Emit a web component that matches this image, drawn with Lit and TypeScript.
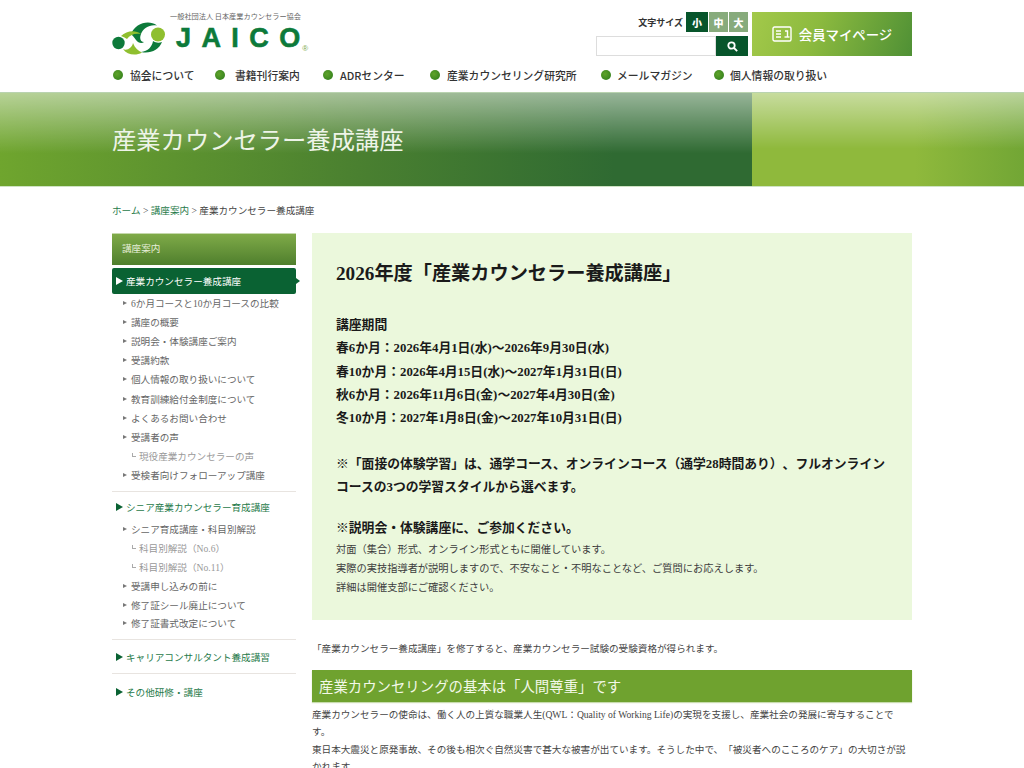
import { LitElement, html, css, svg } from "lit";
import { customElement } from "lit/decorators.js";

const navItems = [
  { t: "協会について", w: 102, g: 7 },
  { t: "書籍刊行案内", w: 108, g: 10 },
  { t: "ADRセンター", w: 107, g: 7 },
  { t: "産業カウンセリング研究所", w: 171, g: 7 },
  { t: "メールマガジン", w: 113, g: 6 },
  { t: "個人情報の取り扱い", w: 130, g: 6 },
];

type Row = { t: string; k: "sub" | "subsub" };
const side1: Row[] = [
  { t: "6か月コースと10か月コースの比較", k: "sub" },
  { t: "講座の概要", k: "sub" },
  { t: "説明会・体験講座ご案内", k: "sub" },
  { t: "受講約款", k: "sub" },
  { t: "個人情報の取り扱いについて", k: "sub" },
  { t: "教育訓練給付金制度について", k: "sub" },
  { t: "よくあるお問い合わせ", k: "sub" },
  { t: "受講者の声", k: "sub" },
  { t: "現役産業カウンセラーの声", k: "subsub" },
  { t: "受検者向けフォローアップ講座", k: "sub" },
];
const side2: Row[] = [
  { t: "シニア育成講座・科目別解説", k: "sub" },
  { t: "科目別解説（No.6）", k: "subsub" },
  { t: "科目別解説（No.11）", k: "subsub" },
  { t: "受講申し込みの前に", k: "sub" },
  { t: "修了証シール廃止について", k: "sub" },
  { t: "修了証書式改定について", k: "sub" },
];

@customElement("app-root")
export class AppRoot extends LitElement {
  static styles = css`
    :host {
      display: block;
      height: 768px;
      overflow: hidden;
      background: #fff;
      font-family: "Liberation Serif", "Noto Sans CJK JP", serif;
      color: #333;
      text-spacing-trim: space-all;
    }
    .wrap { width: 800px; margin: 0 auto; }
    header { height: 92px; }
    .top { display: flex; justify-content: space-between; height: 61px; padding-top: 12px; box-sizing: border-box; }
    .logo { display: flex; flex-direction: column; width: 210px; }
    .tagline { font: 7.2px "Noto Sans CJK JP", sans-serif; color: #666; margin-left: 58px; line-height: 8px; white-space: nowrap; }
    .logo-row { display: flex; align-items: center; margin-top: 1px; }
    .logo-row svg { display: block; }
    .jaico { font: 700 27px "Liberation Sans", sans-serif; letter-spacing: 10.4px; color: #0d7a3a; margin-left: 10px; line-height: 30px; -webkit-text-stroke: 0.6px #0d7a3a; }
    .jaico i { font-style: normal; letter-spacing: 0; }
    .reg { font: 8px "Liberation Sans", sans-serif; color: #7aa84a; align-self: flex-end; margin: 0 0 2px 2px; }
    .tools { display: flex; gap: 4px; }
    .tools-left { width: 152px; display: flex; flex-direction: column; gap: 4px; }
    .size { display: flex; justify-content: flex-end; align-items: center; height: 20px; font: 700 9px "Noto Sans CJK JP", sans-serif; }
    .size span.lbl { margin-right: 3px; color: #333; }
    .size b { width: 20px; height: 20px; display: flex; align-items: center; justify-content: center; color: #fff; font-size: 10px; background: #87ab7c; border-left: 1px solid #fff; box-sizing: border-box; }
    .size b.on { background: #07552b; width: 22px; border-left: 0; }
    .search { display: flex; height: 20px; }
    .search .inp { width: 120px; box-sizing: border-box; border: 1px solid #ddd; background: #fff; }
    .search .btn { width: 32px; background: #07552b; display: flex; align-items: center; justify-content: center; }
    .member { width: 160px; height: 44px; background: linear-gradient(110deg, #a3c94a 0%, #8cba3f 40%, #4f9035 100%); color: #fff; display: flex; align-items: center; justify-content: center; gap: 7px; font: 500 13.4px "Noto Sans CJK JP", sans-serif; }
    nav { display: flex; height: 28px; align-items: flex-start; padding-top: 6px; box-sizing: border-box; font: 500 10.8px/16px "Noto Sans CJK JP", sans-serif; color: #333; white-space: nowrap; }
    nav span { display: flex; align-items: center; flex: none; }
    nav span::before { content: ""; width: 10px; height: 10px; border-radius: 50%; background: radial-gradient(circle at 40% 40%, #5fa32a, #2c7a1c); margin: 0 var(--g) 0 1px; }
    .hero { height: 95px; display: flex; box-sizing: border-box; border-top: 1px solid #b9d3b0; border-bottom: 1px solid #cfe3c4;
      background:
        linear-gradient(180deg, rgba(255,255,255,.5) 0%, rgba(255,255,255,0) 65%),
        linear-gradient(90deg, #6fa52e 0%, #4a8030 35%, #2f6a32 60%, #2f6a32 100%); }
    .hero-l { width: 752px; display: flex; align-items: center; padding-left: 112px; box-sizing: border-box; font: 400 24.3px "Noto Sans CJK JP", sans-serif; color: #eef4e8; padding-bottom: 2px; }
    .hero-r { flex: 1; background:
        linear-gradient(180deg, rgba(255,255,255,.5) 0%, rgba(255,255,255,0) 60%),
        linear-gradient(90deg, #8fb93c 0%, #8fb93c 60%, #72a635 100%); }
    .crumb { font-size: 9.6px; line-height: 14px; padding-top: 17px; height: 46px; box-sizing: border-box; color: #444; }
    .crumb a { color: #1f7a4a; }
    .cols { display: flex; gap: 16px; align-items: flex-start; }
    aside { width: 184px; font-size: 9.6px; color: #666; }
    .s-title { height: 32px; background: linear-gradient(180deg, #7faa48 0%, #4f7f2d 100%); border-top: 1px solid #c5d8ac; box-sizing: border-box; color: #e6efd8; display: flex; align-items: center; padding: 0 0 3px 10px; }
    .s-active { position: relative; height: 26px; margin: 3px 0 -1px; background: #0a6233; color: #fff; border-radius: 2px; display: flex; align-items: center; padding-left: 4px; }
    .s-active::after { content: ""; position: absolute; right: -4px; top: 10px; border-left: 4px solid #0a6233; border-top: 3.5px solid transparent; border-bottom: 3.5px solid transparent; }
    .tri { width: 0; height: 0; border-left: 7px solid currentColor; border-top: 4px solid transparent; border-bottom: 4px solid transparent; margin-right: 3px; flex: none; }
    .row { height: 19.2px; display: flex; align-items: center; padding-left: 11px; white-space: nowrap; }
    .list2 .row { height: 18.8px; }
    .row::before { content: ""; border-left: 4px solid #777; border-top: 2.5px solid transparent; border-bottom: 2.5px solid transparent; margin-right: 4px; }
    .row.subsub { padding-left: 20px; color: #999; }
    .row.subsub::before { width: 4px; height: 4px; border: 0; border-left: 1px solid #aaa; border-bottom: 1px solid #aaa; margin: -3px 3px 0 0; box-sizing: border-box; }
    .s-head { display: flex; align-items: center; padding-left: 4px; height: 19.2px; color: #1f7a4a; white-space: nowrap; }
    .s-head .tri { color: #0a6233; }
    .s-sep { border-top: 1px solid #e8e4e0; }
    .sep1 { margin: 6px 0 6px; }
    .sep2 { margin: 6px 0 8px; }
    .sep3 { margin: 6px 0 8px; }
    .list2 { margin-top: 3px; }
    main { width: 600px; }
    .box { background: #ebf8dc; height: 387px; padding: 28px 24px 0; box-sizing: border-box; }
    h1 { font-size: 19.2px; line-height: 26px; margin: 0 0 27px; color: #1a1a1a; }
    .b { font-size: 12.8px; font-weight: 700; line-height: 23.3px; color: #1a1a1a; }
    .gap { height: 22.5px; }
    .gap2 { height: 17px; }
    .small { font-size: 10.24px; line-height: 19px; color: #3c3c3c; }
    .intro { font-size: 9.6px; line-height: 17px; margin: 20px 0 13px; color: #444; }
    h2 { margin: 0 0 4px; height: 32px; background: #6fa22f; color: #f3f8e8; font-size: 14.4px; font-weight: 400; display: flex; align-items: center; padding: 0 0 2px 7px; box-sizing: border-box; box-shadow: 0 1px 1px #c8dcae; }
    .para { font-size: 9.6px; line-height: 17.28px; color: #444; margin: 0; }
  `;

  private logo() {
    return svg`<svg width="54" height="34" viewBox="0 0 54 34">
      <circle cx="6.5" cy="22" r="6.2" fill="#0d7a3a"/>
      <circle cx="46" cy="13.5" r="7" fill="#8fbf2f"/>
      <path d="M19 13 C23 3 36 -2 45 4.5 C38 3 31 7 29 13 C27 18 29 21 32 21 C30 23 26 22 24 19 C22 16 20 14 19 13Z" fill="#0d7a3a"/>
      <path d="M50 21 C47 29 38 33 29 31 C36 30 40 26 41 20 C44 22 47 22 50 21Z" fill="#0d7a3a"/>
      <path d="M9 15 C15 9 24 9 29 13 C22 12 18 14 15 18 C13 16.5 11 15.5 9 15Z" fill="#8fbf2f"/>
      <path d="M11 28 C15 30 20 27 21 22 C23 27 26 30 30 31.5 C24 35 15 34 11 28Z" fill="#8fbf2f"/>
    </svg>`;
  }

  render() {
    return html`
      <header class="wrap">
        <div class="top">
          <div class="logo">
            <div class="tagline">一般社団法人 日本産業カウンセラー協会</div>
            <div class="logo-row">
              ${this.logo()}
              <span class="jaico">JAIC<i>O</i></span><span class="reg">®</span>
            </div>
          </div>
          <div class="tools">
            <div class="tools-left">
              <div class="size"><span class="lbl">文字サイズ</span><b class="on">小</b><b>中</b><b>大</b></div>
              <div class="search">
                <div class="inp"></div>
                <div class="btn">
                  <svg width="11" height="11" viewBox="0 0 11 11" fill="none" stroke="#fff" stroke-width="1.8"><circle cx="4.5" cy="4.5" r="3.2"/><path d="M7 7l3.2 3.2"/></svg>
                </div>
              </div>
            </div>
            <div class="member">
              <svg width="20" height="16" viewBox="0 0 20 16" fill="none" stroke="#fff" stroke-width="1.4"><rect x="1" y="1" width="18" height="14" rx="1.5"/><path d="M4 5h5M4 8h5M4 11h5M13 5h2.5v6"/><path d="M12.5 11h5"/></svg>
              <span>会員マイページ</span>
            </div>
          </div>
        </div>
        <nav>${navItems.map((n) => html`<span style="width:${n.w}px;--g:${n.g}px">${n.t}</span>`)}</nav>
      </header>
      <div class="hero">
        <div class="hero-l">産業カウンセラー養成講座</div>
        <div class="hero-r"></div>
      </div>
      <div class="wrap">
        <div class="crumb"><a>ホーム</a> &gt; <a>講座案内</a> &gt; 産業カウンセラー養成講座</div>
        <div class="cols">
          <aside>
            <div class="s-title">講座案内</div>
            <div class="s-active"><i class="tri"></i>産業カウンセラー養成講座</div>
            ${side1.map((r) => html`<div class="row ${r.k}">${r.t}</div>`)}
            <div class="s-sep sep1"></div>
            <div class="s-head"><i class="tri"></i>シニア産業カウンセラー育成講座</div>
            <div class="list2">${side2.map((r) => html`<div class="row ${r.k}">${r.t}</div>`)}</div>
            <div class="s-sep sep2"></div>
            <div class="s-head"><i class="tri"></i>キャリアコンサルタント養成講習</div>
            <div class="s-sep sep3"></div>
            <div class="s-head"><i class="tri"></i>その他研修・講座</div>
          </aside>
          <main>
            <div class="box">
              <h1>2026年度「産業カウンセラー養成講座」</h1>
              <div class="b">講座期間</div>
              <div class="b">春6か月：2026年4月1日(水)～2026年9月30日(水)</div>
              <div class="b">春10か月：2026年4月15日(水)～2027年1月31日(日)</div>
              <div class="b">秋6か月：2026年11月6日(金)～2027年4月30日(金)</div>
              <div class="b">冬10か月：2027年1月8日(金)～2027年10月31日(日)</div>
              <div class="gap"></div>
              <div class="b">※「面接の体験学習」は、通学コース、オンラインコース（通学28時間あり）、フルオンラインコースの3つの学習スタイルから選べます。</div>
              <div class="gap2"></div>
              <div class="b">※説明会・体験講座に、ご参加ください。</div>
              <div class="small">対面（集合）形式、オンライン形式ともに開催しています。</div>
              <div class="small">実際の実技指導者が説明しますので、不安なこと・不明なことなど、ご質問にお応えします。</div>
              <div class="small">詳細は開催支部にご確認ください。</div>
            </div>
            <p class="intro">「産業カウンセラー養成講座」を修了すると、産業カウンセラー試験の受験資格が得られます。</p>
            <h2>産業カウンセリングの基本は「人間尊重」です</h2>
            <p class="para">産業カウンセラーの使命は、働く人の上質な職業人生(QWL：Quality of Working Life)の実現を支援し、産業社会の発展に寄与することで<br>す。<br>東日本大震災と原発事故、その後も相次ぐ自然災害で甚大な被害が出ています。そうした中で、「被災者へのこころのケア」の大切さが説かれます。</p>
          </main>
        </div>
      </div>
    `;
  }
}
